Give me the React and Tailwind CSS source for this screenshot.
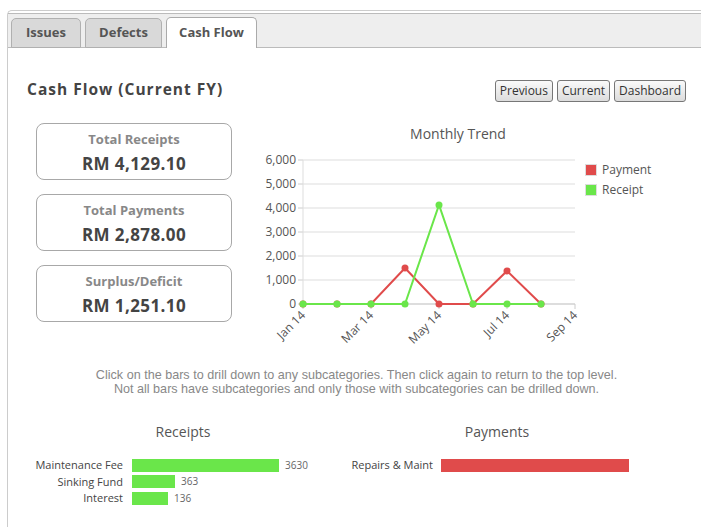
import React from "react";

const months = ["Jan 14", "Feb 14", "Mar 14", "Apr 14", "May 14", "Jun 14", "Jul 14", "Aug 14", "Sep 14"];
const payment = [0, 0, 0, 1500, 0, 0, 1378, 0];
const receipt = [0, 0, 0, 0, 4129.1, 0, 0, 0];

const X0 = 63;
const STEP = 34;
const Y0 = 188;
const PER = 24 / 1000;

const px = (i) => X0 + STEP * i;
const py = (v) => Y0 - v * PER;

function TrendChart() {
  const gridVals = [0, 1000, 2000, 3000, 4000, 5000, 6000];
  const pts = (arr) => arr.map((v, i) => `${px(i)},${py(v)}`).join(" ");
  return (
    <svg width="420" height="232" className="block" style={{ fontFamily: "'Open Sans', sans-serif" }}>
      <text x="218" y="23" textAnchor="middle" fontSize="14" fill="#555">Monthly Trend</text>
      {gridVals.map((v) => (
        <g key={v}>
          <line x1={X0} x2={px(8)} y1={py(v)} y2={py(v)} stroke="#dddddd" strokeWidth="1" />
          <line x1={X0 - 5} x2={X0} y1={py(v)} y2={py(v)} stroke="#cccccc" strokeWidth="1" />
          <text x={X0 - 7} y={py(v) + 4} textAnchor="end" fontSize="12" fill="#555">
            {v.toLocaleString("en-US")}
          </text>
        </g>
      ))}
      <line x1={X0} x2={X0} y1={py(6000)} y2={Y0} stroke="#dddddd" strokeWidth="1" />
      <line x1={X0} x2={px(8)} y1={Y0} y2={Y0} stroke="#cccccc" strokeWidth="1" />
      {[0, 2, 4, 6, 8].map((i) => (
        <g key={i}>
          <line x1={px(i)} x2={px(i)} y1={Y0} y2={Y0 + 5} stroke="#cccccc" strokeWidth="1" />
          <text
            x={px(i) + 3}
            y={Y0 + 12}
            textAnchor="end"
            fontSize="12"
            fill="#555"
            transform={`rotate(-45 ${px(i) + 3} ${Y0 + 12})`}
          >
            {months[i]}
          </text>
        </g>
      ))}
      <polyline points={pts(payment)} fill="none" stroke="#e04b4b" strokeWidth="2" />
      {payment.map((v, i) => (
        <circle key={i} cx={px(i)} cy={py(v)} r="3.5" fill="#e04b4b" />
      ))}
      <polyline points={pts(receipt)} fill="none" stroke="#6ae64a" strokeWidth="2" />
      {receipt.map((v, i) => (
        <circle key={i} cx={px(i)} cy={py(v)} r="3.5" fill="#6ae64a" />
      ))}
      <rect x="345.5" y="48.5" width="11" height="11" fill="#e04b4b" stroke="#dddddd" />
      <text x="362" y="58" fontSize="12" fill="#555">Payment</text>
      <rect x="345.5" y="68.5" width="11" height="11" fill="#6ae64a" stroke="#dddddd" />
      <text x="362" y="78" fontSize="12" fill="#555">Receipt</text>
    </svg>
  );
}

function StatBox({ title, value }) {
  return (
    <div className="h-[57px] border border-[#a8a8a8] rounded-[8px] text-center pt-[6px]">
      <div className="text-[13px] leading-[18px] font-bold text-[#888]">{title}</div>
      <div className="text-[17px] leading-[24px] font-bold tracking-[0.4px] text-[#444] mt-[4px]">{value}</div>
    </div>
  );
}

function BarRow({ label, width, value, color, labelW, gap }) {
  return (
    <div className="flex items-center h-[16.5px]">
      <div className="text-right text-[11px] text-[#444] whitespace-nowrap" style={{ width: labelW }}>
        {label}
      </div>
      <div className="h-[13px]" style={{ width, marginLeft: gap, background: color }} />
      {value && <div className="ml-[6px] text-[10px] text-[#666]">{value}</div>}
    </div>
  );
}

function Tab({ label, active, w }) {
  return active ? (
    <div
      className={`${w} h-[31px] -mb-px bg-white border border-b-0 border-[#aaaaaa] rounded-t-[5px] flex items-center justify-center text-[13px] font-bold text-[#555]`}
    >
      {label}
    </div>
  ) : (
    <div
      className={`${w} h-[30px] -mb-px bg-[#d9d9d9] border border-[#b0b0b0] rounded-t-[5px] flex items-center justify-center text-[13px] font-bold text-[#555]`}
    >
      {label}
    </div>
  );
}

export default function App() {
  return (
    <div className="w-[701px] h-[527px] bg-white overflow-hidden font-['Open_Sans',sans-serif]">
      <div className="ml-[7px] mt-[10px] h-[517px] border-l border-t border-[#cccccc] rounded-tl-[5px] pt-[2px]">
        <div className="h-[35px] bg-[#eeeeee] border-t border-b border-[#bbbbbb] flex items-end gap-[4px] pl-[3px]">
          <Tab label="Issues" w="w-[70px]" />
          <Tab label="Defects" w="w-[77px]" />
          <Tab label="Cash Flow" w="w-[91px]" active />
        </div>

        <div className="pl-[19px] pr-[15px]">
          <div className="flex items-center justify-between pt-[32px]">
            <div className="text-[15.5px] font-bold tracking-[1px] text-[#444] -mt-[3px]">Cash Flow (Current FY)</div>
            <div className="flex gap-[4px]">
              {["Previous", "Current", "Dashboard"].map((b) => (
                <button
                  key={b}
                  className="h-[22px] px-[4px] border border-[#777] rounded-[3px] bg-gradient-to-b from-[#fafafa] to-[#dcdcdc] text-[12px] text-[#333] leading-none"
                >
                  {b}
                </button>
              ))}
            </div>
          </div>

          <div className="flex mt-[14px]">
            <div className="ml-[9px] w-[196px] pt-[7px] flex flex-col gap-[14px]">
              <StatBox title="Total Receipts" value="RM 4,129.10" />
              <StatBox title="Total Payments" value="RM 2,878.00" />
              <StatBox title="Surplus/Deficit" value="RM 1,251.10" />
            </div>
            <div className="ml-[8px]">
              <TrendChart />
            </div>
          </div>

          <div className="mt-[20px] text-center text-[12.6px] leading-[14px] text-[#888] font-['Liberation_Sans',Arial,sans-serif]">
            <div>Click on the bars to drill down to any subcategories. Then click again to return to the top level.</div>
            <div>Not all bars have subcategories and only those with subcategories can be drilled down.</div>
          </div>

          <div className="flex mt-[26px]">
            <div className="w-[312px]">
              <div className="text-center text-[14px] leading-[20px] text-[#555]">Receipts</div>
              <div className="mt-[15px]">
                <BarRow label="Maintenance Fee" width={147} value="3630" color="#6ae64a" labelW={96} gap={9} />
                <BarRow label="Sinking Fund" width={43} value="363" color="#6ae64a" labelW={96} gap={9} />
                <BarRow label="Interest" width={36} value="136" color="#6ae64a" labelW={96} gap={9} />
              </div>
            </div>
            <div className="w-[316px]">
              <div className="text-center text-[14px] leading-[20px] text-[#555]">Payments</div>
              <div className="mt-[15px]">
                <BarRow label="Repairs & Maint" width={188} color="#e04b4b" labelW={94} gap={8} />
              </div>
            </div>
          </div>
        </div>
      </div>
    </div>
  );
}
